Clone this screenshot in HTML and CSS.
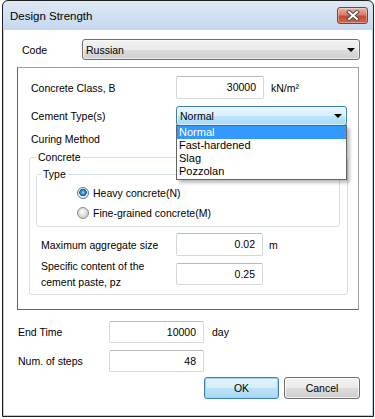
FILE: index.html
```html
<!DOCTYPE html>
<html lang="en">
<head>
    <meta charset="UTF-8">
    <meta name="viewport" content="width=device-width, initial-scale=1.0">
    <title>Design Strength</title>
    <link rel="stylesheet" href="styles.css">
</head>
<body>
    <div class="window">
        <div class="titlebar">
            <span class="title">Design Strength</span>
            <span class="close-btn">
                <svg width="14" height="11" viewBox="0 0 14 11">
                    <path d="M3 2 L11 9 M11 2 L3 9" stroke="#4a4a4a" stroke-width="4" stroke-linecap="square" fill="none"/>
                    <path d="M3 2 L11 9 M11 2 L3 9" stroke="#fff" stroke-width="2" stroke-linecap="square" fill="none"/>
                </svg>
            </span>
        </div>

        <div class="client">
            <div class="row code-row">
                <span class="lbl">Code</span>
                <div class="combo code-combo">Russian<span class="arrow"></span></div>
            </div>

            <div class="frame">
                <div class="row">
                    <span class="lbl frame-lbl">Concrete Class, B</span>
                    <div class="input class-input">30000</div>
                    <span class="unit">kN/m²</span>
                </div>
                <div class="row cement-row">
                    <span class="lbl frame-lbl">Cement Type(s)</span>
                    <div class="combo focused cement-combo">
                        Normal<span class="arrow"></span>
                        <ul class="droplist">
                            <li class="selected">Normal</li>
                            <li>Fast-hardened</li>
                            <li>Slag</li>
                            <li>Pozzolan</li>
                        </ul>
                    </div>
                </div>
                <div class="curing">Curing Method</div>

                <fieldset class="group concrete">
                    <legend>Concrete</legend>
                    <fieldset class="group type">
                        <legend>Type</legend>
                        <div class="radio first">
                            <span class="radio-dot checked"></span>Heavy concrete(N)
                        </div>
                        <div class="radio">
                            <span class="radio-dot"></span>Fine-grained concrete(M)
                        </div>
                    </fieldset>
                    <div class="row agg-row">
                        <span class="lbl group-lbl">Maximum aggregate size</span>
                        <div class="input group-input">0.02</div>
                        <span class="unit">m</span>
                    </div>
                    <div class="row paste-row">
                        <span class="lbl group-lbl two-line">Specific content of the<br>cement paste, pz</span>
                        <div class="input group-input">0.25</div>
                    </div>
                </fieldset>
            </div>

            <div class="row end-row">
                <span class="lbl bottom-lbl">End Time</span>
                <div class="input bottom-input">10000</div>
                <span class="unit">day</span>
            </div>
            <div class="row steps-row">
                <span class="lbl bottom-lbl">Num. of steps</span>
                <div class="input bottom-input">48</div>
            </div>

            <div class="buttons">
                <button class="btn default ok-btn">OK</button>
                <button class="btn cancel-btn">Cancel</button>
            </div>
        </div>
    </div>
</body>
</html>
```

FILE: styles.css
```css
body {
    margin: 0;
    background-color: #fff;
    font-family: "Liberation Sans", Arial, sans-serif;
    font-size: 10.5px;
    color: #000;
}

.window {
    margin-left: 2px;
    width: 372px;
    height: 417px;
    box-sizing: border-box;
    border: 1px solid #1e1e1e;
    border-radius: 6px 6px 0 0;
    background: linear-gradient(#dfe9f6, #c6d8ef 28px, #c0d4ee);
    display: flex;
    flex-direction: column;
    overflow: hidden;
}

.titlebar {
    height: 29px;
    flex: none;
    display: flex;
    align-items: center;
    justify-content: space-between;
    padding: 0 5px 0 7px;
}
.title {
    font-size: 11.5px;
    color: #000;
}
.close-btn {
    width: 31px;
    height: 17px;
    box-sizing: border-box;
    border: 1px solid #8c3a2b;
    border-radius: 3px;
    background: linear-gradient(#eab3a5 0%, #dc7c66 45%, #c9492f 55%, #d0654c 100%);
    display: flex;
    align-items: center;
    justify-content: center;
    box-shadow: inset 0 0 0 1px rgba(255, 255, 255, 0.35);
}
.close-btn svg {
    display: block;
}

.client {
    flex: 1;
    background-color: #fff;
    border: 1px solid #b4cbe8;
    border-top: none;
}

.row {
    display: flex;
    align-items: center;
    height: 23px;
}
.lbl {
    box-sizing: border-box;
    flex: none;
}

/* combo boxes */
.combo {
    position: relative;
    box-sizing: border-box;
    border: 1px solid #707070;
    border-radius: 3px;
    background: linear-gradient(#f2f2f2 0%, #ebebeb 50%, #dddddd 50%, #cfcfcf 100%);
    box-shadow: inset 0 0 0 1px rgba(255, 255, 255, 0.6);
    padding-left: 3px;
    display: flex;
    align-items: center;
}
.combo.focused {
    border-color: #3c7fb1;
    background: linear-gradient(#eaf6fd 0%, #d9f0fc 50%, #bee6fd 50%, #a7d9f5 100%);
}
.arrow {
    margin-left: auto;
    margin-right: 4px;
    width: 0;
    height: 0;
    border-left: 4px solid transparent;
    border-right: 4px solid transparent;
    border-top: 4px solid #000;
}

.code-row {
    margin-top: 9px;
    height: 21px;
}
.code-row .lbl {
    width: 78px;
    padding-left: 18px;
}
.code-combo {
    width: 278px;
    height: 21px;
}

/* main frame */
.frame {
    margin: 7px 0 0 13px;
    width: 342px;
    height: 243px;
    box-sizing: border-box;
    border: 1px solid;
    border-color: #a0a0a0 #a0a0a0 #646464 #646464;
    padding-top: 8px;
}
.frame-lbl {
    width: 158px;
    padding-left: 13px;
}

.input {
    box-sizing: border-box;
    height: 23px;
    border: 1px solid #d4d8de;
    border-top-color: #b5b9c0;
    border-radius: 2px;
    background-color: #fff;
    text-align: right;
    padding-right: 7px;
    line-height: 21px;
}
.class-input {
    width: 88px;
}
.unit {
    margin-left: 7px;
}

.cement-row {
    margin-top: 7px;
    height: 20px;
}
.cement-combo {
    width: 171px;
    height: 20px;
}

.droplist {
    position: absolute;
    top: 18px;
    left: -1px;
    width: 171px;
    box-sizing: border-box;
    margin: 0;
    padding: 0 0 1px;
    list-style: none;
    background-color: #fff;
    border: 1px solid #646464;
    box-shadow: 3px 3px 3px rgba(0, 0, 0, 0.25);
    z-index: 2;
}
.droplist li {
    height: 13px;
    line-height: 13px;
    padding-left: 2px;
    font-size: 11px;
}
.droplist li.selected {
    background-color: #3399ff;
    color: #fff;
}

.curing {
    margin-top: 5px;
    height: 16px;
    line-height: 16px;
    padding-left: 13px;
}

/* group boxes */
.group {
    border: 1px solid #d5dfe5;
    border-radius: 3px;
    padding: 0;
    min-inline-size: 0;
}
.group legend {
    padding: 0 2px;
    line-height: 14px;
}
.concrete {
    margin: 3px 0 0 11px;
    width: 319px;
    box-sizing: border-box;
    padding-bottom: 9px;
}
.concrete > legend {
    margin-left: 6px;
}
.type {
    margin: 3px 0 0 6px;
    width: 304px;
    box-sizing: border-box;
    padding-bottom: 5px;
}
.type > legend {
    margin-left: 4px;
}

.radio {
    display: flex;
    align-items: center;
    height: 16px;
    margin-top: 4px;
    padding-left: 40px;
}
.radio-dot {
    width: 12px;
    height: 12px;
    box-sizing: border-box;
    margin-right: 4px;
    border-radius: 50%;
    border: 1px solid #8a8a8a;
    background: radial-gradient(circle at 45% 40%, #ffffff 0, #e6e6e6 3px, #d2d2d2 5px);
}
.radio-dot.checked {
    border-color: #5a7a94;
    background: radial-gradient(circle at 50% 45%, #9ee3ff 0, #2f8fd2 2px, #17588e 3.5px, #e9e9e9 4px, #f6f6f6 5px);
}

.group-lbl {
    width: 146px;
    padding-left: 11px;
}
.group-input {
    width: 87px;
}
.agg-row {
    margin-top: 6px;
}
.agg-row .unit {
    margin-left: 6px;
}
.paste-row {
    margin-top: 7px;
    height: 22px;
}
.paste-row .input {
    height: 22px;
    line-height: 20px;
}
.two-line {
    line-height: 16px;
}

/* bottom fields */
.end-row {
    margin-top: 11px;
    height: 22px;
}
.steps-row {
    margin-top: 7px;
    height: 22px;
}
.bottom-lbl {
    width: 105px;
    padding-left: 14px;
}
.bottom-input {
    width: 95px;
    height: 22px;
    line-height: 20px;
}
.end-row .unit {
    margin-left: 8px;
}

.buttons {
    margin-top: 5px;
    display: flex;
    justify-content: flex-end;
    gap: 5px;
    padding-right: 12px;
}
.btn {
    box-sizing: border-box;
    height: 22px;
    padding: 0;
    font-family: inherit;
    font-size: 10.5px;
    color: #000;
    border: 1px solid #707070;
    border-radius: 3px;
    background: linear-gradient(#f2f2f2 0%, #ebebeb 50%, #dddddd 50%, #cfcfcf 100%);
    box-shadow: inset 0 0 0 1px rgba(255, 255, 255, 0.7);
}
.btn.default {
    border-color: #3c7fb1;
    background: linear-gradient(#e5f4fc 0%, #d5edfa 50%, #bde3f7 50%, #a9d9f3 100%);
    box-shadow: inset 0 0 0 1px #9fd5f3;
}
.ok-btn {
    width: 75px;
}
.cancel-btn {
    width: 76px;
}
```
